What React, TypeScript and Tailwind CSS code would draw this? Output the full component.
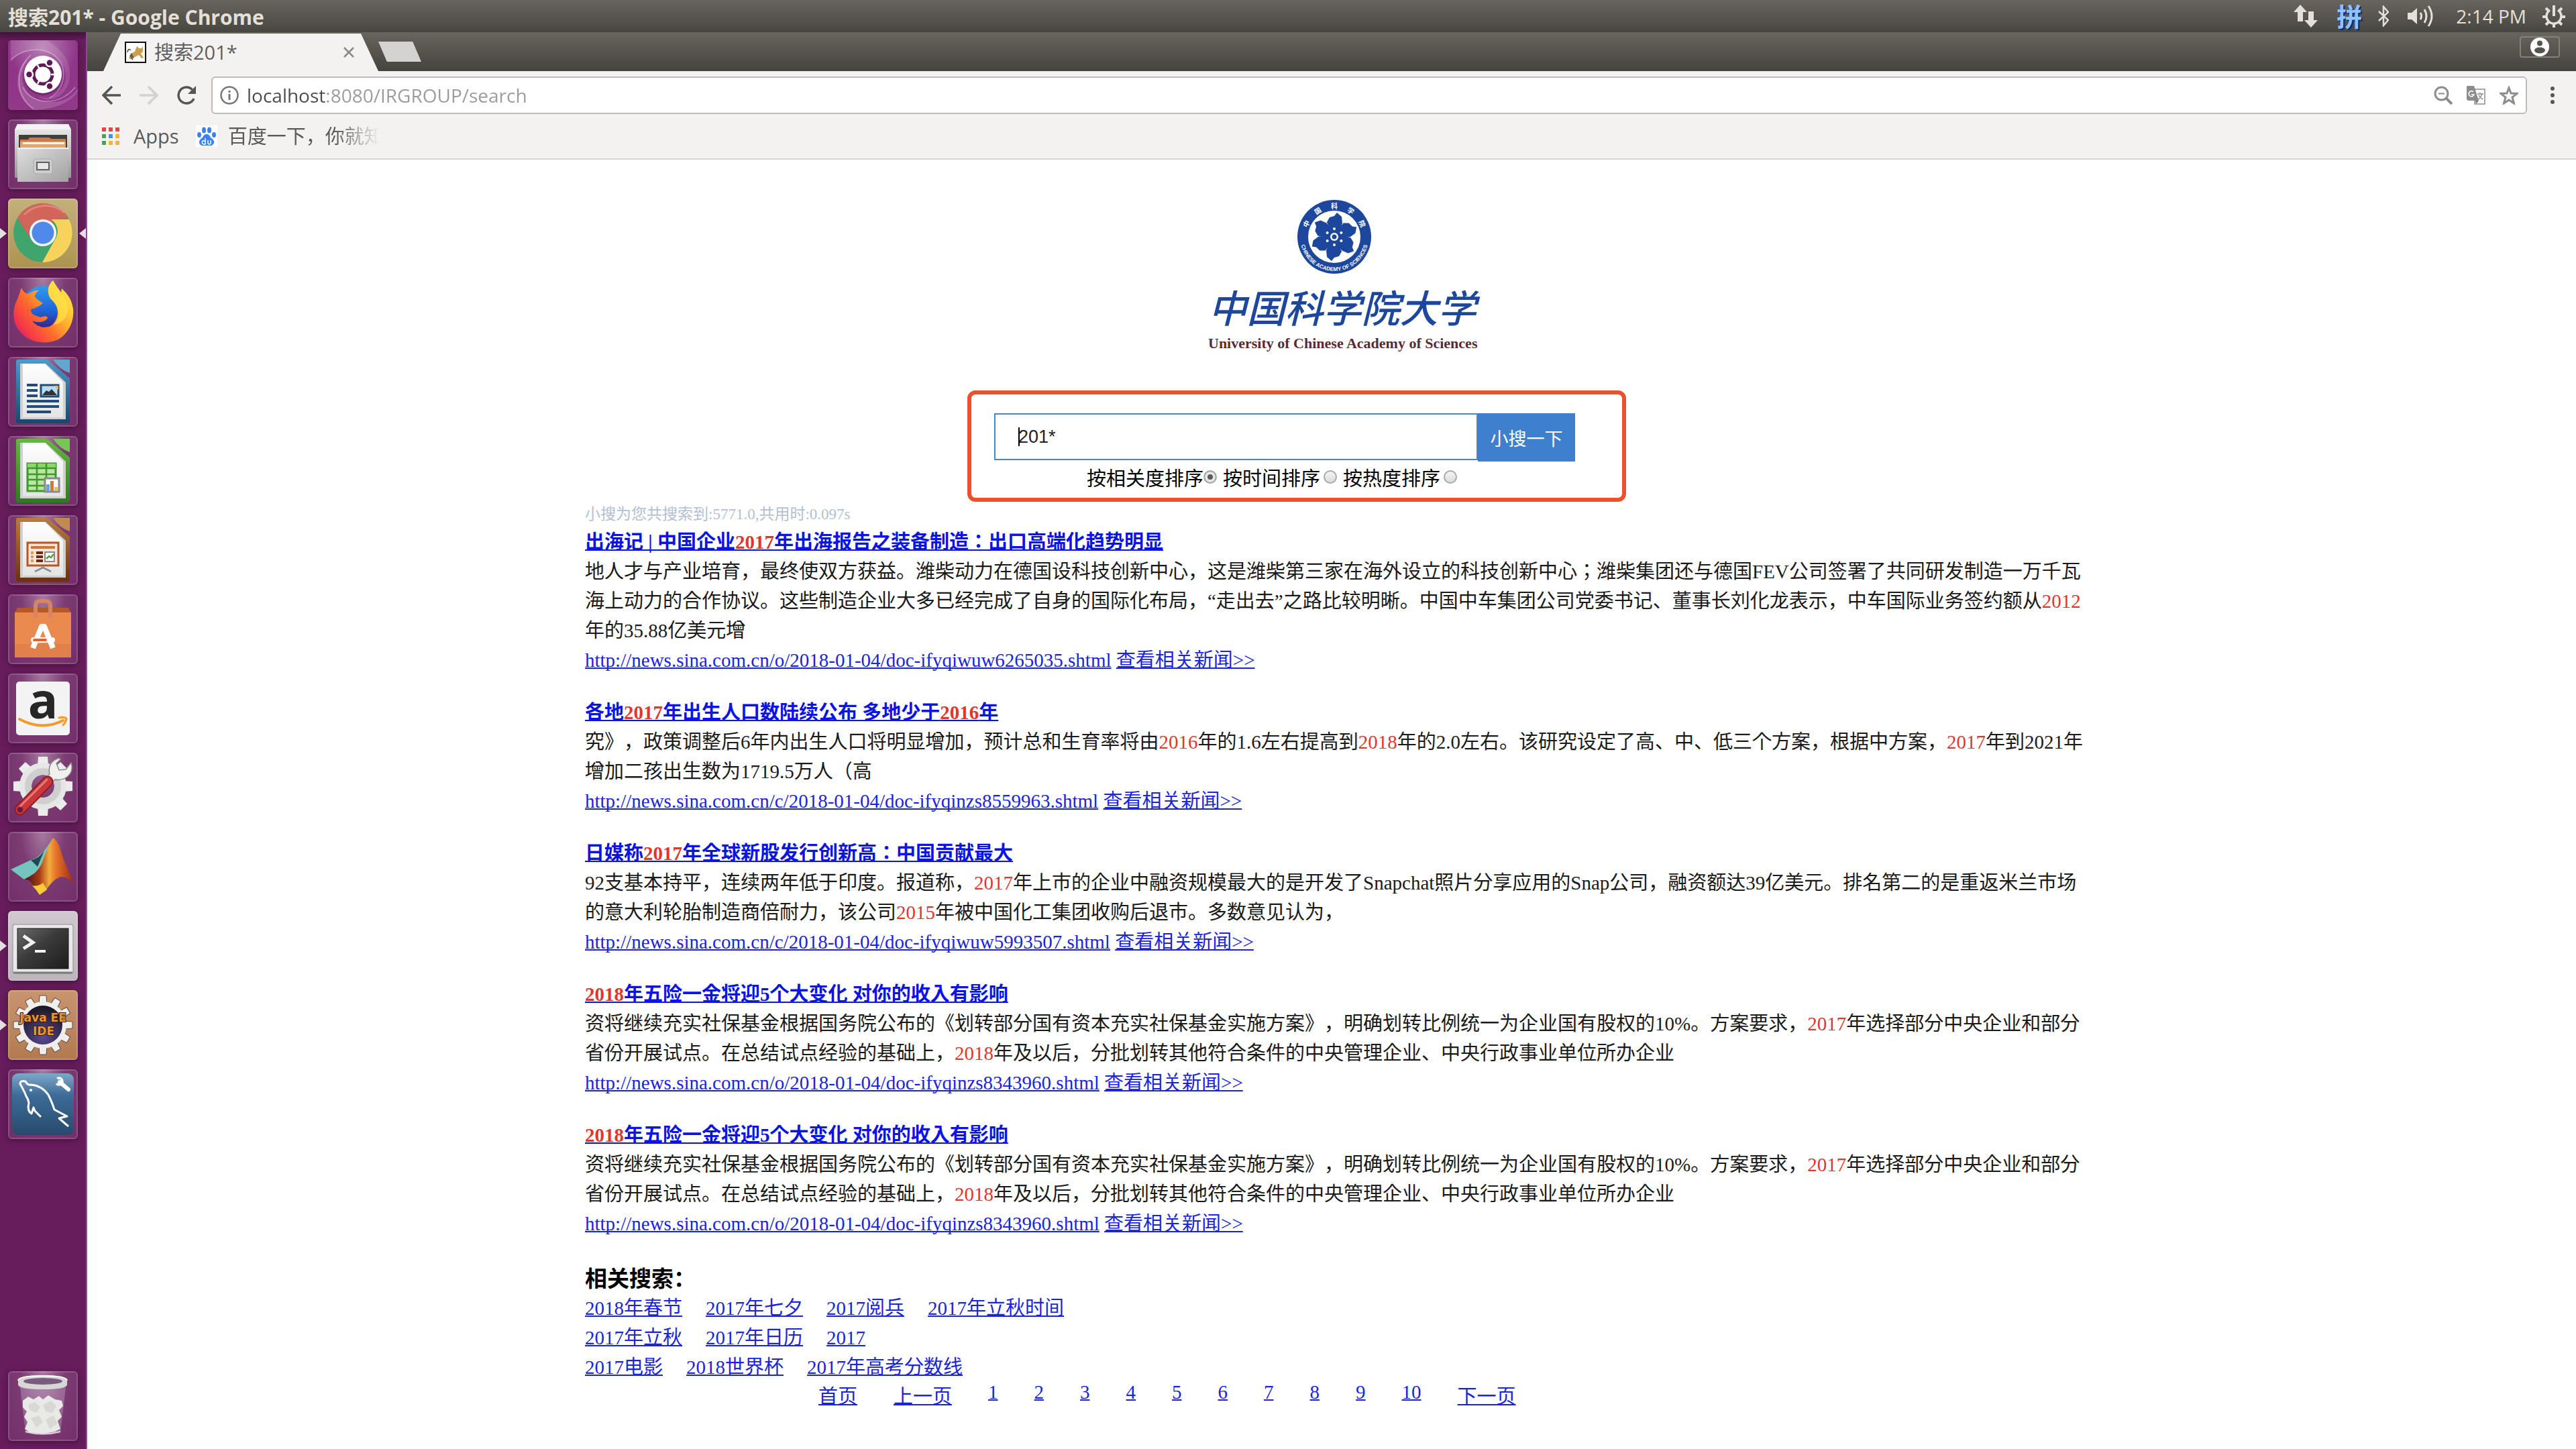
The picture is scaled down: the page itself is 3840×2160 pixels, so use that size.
import React from "react";

/* ---------- Launcher artwork (104 x 104 tiles) ---------- */

const Svg = ({ children }: { children: React.ReactNode }) => (
  <svg viewBox="0 0 104 104" className="block size-full" aria-hidden="true">
    {children}
  </svg>
);

const DashArt = () => (
  <Svg>
    <defs>
      <radialGradient id="dashBg" cx="0.5" cy="0.1" r="1">
        <stop offset="0" stopColor="#b77fb4" />
        <stop offset="0.5" stopColor="#8f3488" />
        <stop offset="1" stopColor="#93398a" />
      </radialGradient>
    </defs>
    <rect width="104" height="104" rx="5" fill="url(#dashBg)" />
    <path d="M4 30C24 8 66 8 82 38C96 66 70 92 46 84C60 96 96 84 92 44C88 14 60 4 60 0H4Z" fill="#fff" opacity="0.13" />
    <path d="M38 104C8 84 6 44 32 24C10 54 22 92 66 92C84 92 96 84 104 72V76C92 96 60 104 38 104Z" fill="#fff" opacity="0.16" />
    <path d="M4 30C24 8 66 8 80 36C88 56 78 78 62 86M38 102C10 82 10 44 34 22M22 70C34 96 76 100 100 70" stroke="#fff" strokeWidth="1.5" fill="none" opacity="0.35" />
    <circle cx="52" cy="54" r="28" fill="#3d0a3c" opacity="0.35" />
    <circle cx="52" cy="51" r="28" fill="#fff" />
    <circle cx="52" cy="51" r="14" fill="none" stroke="#5e1a58" strokeWidth="5" />
    <g stroke="#fff" strokeWidth="2.5">
      <circle cx="31.500" cy="51" r="5.500" fill="#5e1a58" />
      <circle cx="62" cy="33.500" r="5.500" fill="#5e1a58" />
      <circle cx="62" cy="68.500" r="5.500" fill="#5e1a58" />
      <path d="M44 37L47 43M44 65L47 59M64 51H72" />
    </g>
  </Svg>
);

const FilesArt = () => (
  <Svg>
    <defs>
      <linearGradient id="cab" x1="0" y1="0" x2="0" y2="1">
        <stop offset="0" stopColor="#efefef" />
        <stop offset="1" stopColor="#979797" />
      </linearGradient>
      <linearGradient id="drawer" x1="0" y1="0" x2="1" y2="1">
        <stop offset="0" stopColor="#dedede" />
        <stop offset="1" stopColor="#a2a2a2" />
      </linearGradient>
    </defs>
    <path d="M14 7H90L94 16V87H10V16Z" fill="url(#cab)" />
    <path d="M14 7H90L94 15H10Z" fill="#f3f3f3" />
    <rect x="16" y="23" width="72" height="22" fill="#3f3f3c" />
    <path d="M18 45V30H30L32 27H62L64 29H86V45Z" fill="#cf7a46" />
    <rect x="18" y="33" width="68" height="12" fill="#eba463" />
    <rect x="22" y="34" width="62" height="3" fill="#fff3e0" />
    <rect x="14" y="42" width="76" height="51" rx="1" fill="url(#drawer)" />
    <path d="M14 43H90" stroke="#f2f2f2" strokeWidth="2" />
    <rect x="38" y="59" width="28" height="22" rx="3" fill="#cdcdcd" stroke="#a8a8a8" />
    <rect x="43" y="64" width="18" height="11" fill="#e8e8e8" stroke="#5f5f5f" strokeWidth="2" />
  </Svg>
);

const ChromeArt = () => (
  <Svg>
    <circle cx="52" cy="51" r="44" fill="#3fa56c" />
    <path d="M52 51L14 29A44 44 0 0 1 90.500 30L71 31Z" fill="#d2645a" />
    <path d="M14 29A44 44 0 0 1 90.500 30H52A21 21 0 0 0 33 60Z" fill="#d2645a" />
    <path d="M90.500 30A44 44 0 0 1 51 95L70 61A21 21 0 0 0 64 31H90Z" fill="#f7d35c" />
    <path d="M24 24A44 44 0 0 1 84 21" stroke="#ea9a92" strokeWidth="3" fill="none" opacity="0.6" />
    <circle cx="52" cy="51" r="20" fill="#f4f6fb" />
    <circle cx="52" cy="51" r="16.500" fill="#5089ea" />
  </Svg>
);

const FirefoxArt = () => (
  <Svg>
    <defs>
      <linearGradient id="fx" x1="1" y1="0.1" x2="0" y2="0.9">
        <stop offset="0" stopColor="#fff44f" />
        <stop offset="0.35" stopColor="#ffb52e" />
        <stop offset="0.6" stopColor="#ff6a2c" />
        <stop offset="0.85" stopColor="#f4334c" />
        <stop offset="1" stopColor="#b31c7c" />
      </linearGradient>
      <linearGradient id="fxGlobe" x1="0" y1="0" x2="0" y2="1">
        <stop offset="0" stopColor="#2f9cf0" />
        <stop offset="0.6" stopColor="#1f62d8" />
        <stop offset="1" stopColor="#3a1d80" />
      </linearGradient>
    </defs>
    <circle cx="52" cy="44" r="32" fill="url(#fxGlobe)" />
    <path
      d="M20 15L14 32C6 46 6 66 16 78C28 97 60 102 78 90C92 80 99 62 97 46C95 34 90 26 84 20L80 16L79 22C75 16 70 10 67 4C58 12 58 24 64 32C78 44 76 60 66 70C58 77 42 74 36 64C44 68 56 66 59 60C58 56 52 58 48 59C42 56 36 56 34 50C34 46 36 46 38 46C42 44 48 42 52 38C46 34 42 32 40 28C40 24 44 20 46 19C40 18 34 22 30 24C26 24 22 20 20 15Z"
      fill="url(#fx)"
    />
    <path d="M67 4C58 12 58 24 64 32C78 44 78 60 68 70C84 68 92 54 88 38C86 28 72 16 67 4Z" fill="#ffe24a" opacity="0.75" />
  </Svg>
);

const Office = ({ id, from, to, corner, children }: { id: string; from: string; to: string; corner: string; children: React.ReactNode }) => (
  <Svg>
    <defs>
      <linearGradient id={id} x1="0" y1="0" x2="0" y2="1">
        <stop offset="0" stopColor={from} />
        <stop offset="1" stopColor={to} />
      </linearGradient>
      <linearGradient id={id + "p"} x1="0" y1="0" x2="0" y2="1">
        <stop offset="0" stopColor="#ffffff" />
        <stop offset="1" stopColor="#e4e4e4" />
      </linearGradient>
    </defs>
    <path d="M15 4H58L92 32V96Q92 99 88 99H15Q12 99 12 96V7Q12 4 15 4Z" fill={`url(#${id})`} />
    <path d="M18 10H56L86 38V93H18Z" fill="#d0d0d0" />
    <path d="M22 10H55L82 38V90H22Z" fill={`url(#${id}p)`} />
    <path d="M67 4H92V24Q78 20 67 4Z" fill={corner} />
    {children}
  </Svg>
);

const WriterArt = () => (
  <Office id="wr" from="#4f9ac9" to="#17476e" corner="#61a7cf">
    <g stroke="#1d4e7c" strokeWidth="4">
      <path d="M28 42H44M28 50H44M28 58H44M28 66H76M28 74H76M28 82H64" />
    </g>
    <rect x="49" y="42" width="26" height="17" fill="#b9dcf2" stroke="#1d4e7c" strokeWidth="3" />
    <path d="M51 57L57 50L61 52L65 48L73 57Z" fill="#333" />
    <path d="M68 43H75V49Z" fill="#e8b94a" />
  </Office>
);

const CalcArt = () => (
  <Office id="ca" from="#67b840" to="#2e7a20" corner="#78c65a">
    <rect x="29" y="41" width="42" height="41" fill="#b9e6a2" stroke="#3d9a28" strokeWidth="3" />
    <rect x="29" y="41" width="42" height="6" fill="#8fd56f" />
    <path d="M29 48H71M29 57H71M29 65H71M29 74H71M43 41V82M57 41V82" stroke="#3d9a28" strokeWidth="2.500" />
    <rect x="55" y="63" width="21" height="20" fill="#fff" stroke="#8a8a8a" strokeWidth="3" />
    <rect x="57" y="72" width="5" height="10" fill="#5aaae0" />
    <rect x="63" y="67" width="5" height="15" fill="#d8763a" />
    <rect x="69" y="76" width="5" height="6" fill="#f0c040" />
  </Office>
);

const ImpressArt = () => (
  <Office id="im" from="#b97d42" to="#6b300e" corner="#c08b52">
    <rect x="29" y="41" width="46" height="34" fill="#fbe6d8" stroke="#b4572b" strokeWidth="3" />
    <path d="M34 48H70" stroke="#d07438" strokeWidth="4" />
    <path d="M34 56H38M34 62H38M34 68H38" stroke="#d99a64" strokeWidth="4" />
    <path d="M42 56H52M42 62H52M42 68H52" stroke="#6c2a10" strokeWidth="4" />
    <rect x="55" y="55" width="14" height="14" fill="#fff" stroke="#8a8a8a" strokeWidth="2" />
    <path d="M57 65L61 61L64 63L68 58" stroke="#53a03a" strokeWidth="2.500" fill="none" />
    <path d="M52 76V79M52 78L40 84M52 78L64 84" stroke="#8f8f8f" strokeWidth="3" fill="none" />
  </Office>
);

const SoftwareArt = () => (
  <Svg>
    <path d="M14 20H90L94 27H10Z" fill="#b9572c" />
    <rect x="10" y="27" width="84" height="67" fill="#ea8a4f" />
    <rect x="10" y="74" width="84" height="20" fill="#d9794a" opacity="0.6" />
    <path d="M41 35V17Q41 10 48 10H56Q63 10 63 17V35" stroke="#d98460" strokeWidth="6" fill="none" />
    <path d="M37 80L50 48H54L67 80" stroke="#fff" strokeWidth="8" fill="none" strokeLinejoin="round" />
    <rect x="34" y="64" width="36" height="8" rx="4" fill="#fff" />
    <rect x="37" y="66" width="21" height="4" rx="2" fill="#e8632c" />
  </Svg>
);

const AmazonArt = () => (
  <Svg>
    <rect x="12" y="12" width="80" height="80" rx="5" fill="#f3f3f3" />
    <text x="52" y="67" textAnchor="middle" fontSize="74" fontWeight="bold" fontFamily="Open Sans" fill="#262626">
      a
    </text>
    <path d="M17 68Q50 86 82 70" stroke="#f39a2b" strokeWidth="4" fill="none" strokeLinecap="round" />
    <path d="M76 66Q84 64 87 67Q86 73 82 77" stroke="#f39a2b" strokeWidth="3" fill="none" strokeLinecap="round" />
  </Svg>
);

const TOOTH = [0, 45, 90, 135, 180, 225, 270, 315];

const SettingsArt = () => (
  <Svg>
    <g transform="translate(52 50)">
      {TOOTH.map((a) => (
        <path key={a} d="M-8 -30L-7 -44H7L8 -30Z" fill="#ececec" transform={`rotate(${a})`} />
      ))}
      <circle r="26" fill="none" stroke="#e6e6e6" strokeWidth="18" />
      <circle r="22" fill="none" stroke="#cfcfcf" strokeWidth="10" />
    </g>
    <path d="M62 32Q58 14 76 8L78 10L72 16L76 26L86 25L94 15Q98 28 88 36Q80 42 70 40L64 46L56 38Z" fill="#f0f0ee" stroke="#8c8c8c" strokeWidth="1.500" />
    <path d="M59 43L18 85" stroke="#8f1e22" strokeWidth="17" strokeLinecap="round" />
    <path d="M59 43L18 85" stroke="#c9373b" strokeWidth="13" strokeLinecap="round" />
    <path d="M58 40L18 80" stroke="#e67b78" strokeWidth="3" strokeLinecap="round" />
    <circle cx="18" cy="85" r="4" fill="#5e1a58" stroke="#8f1e22" />
  </Svg>
);

const MatlabArt = () => (
  <Svg>
    <defs>
      <linearGradient id="ml" x1="0" y1="0" x2="1" y2="0">
        <stop offset="0" stopColor="#3c120c" />
        <stop offset="0.3" stopColor="#a63a16" />
        <stop offset="0.5" stopColor="#f3ab3c" />
        <stop offset="0.62" stopColor="#e8772a" />
        <stop offset="1" stopColor="#9c2412" />
      </linearGradient>
    </defs>
    <path d="M4 56L34 42Q50 38 67 9Q58 50 46 58L24 71Z" fill="#74c4c0" />
    <path d="M34 42Q46 40 54 28L44 52Z" fill="#23474e" />
    <path d="M67 9Q72 12 76 20Q84 48 99 78Q86 64 76 68Q66 72 56 88L47 94Q42 86 36 78Q32 70 24 71Q42 64 50 48Q58 24 67 9Z" fill="url(#ml)" />
    <path d="M36 80Q44 82 52 76L58 86L47 94Q42 86 36 80Z" fill="#f8cc3a" />
  </Svg>
);

const TerminalArt = () => (
  <Svg>
    <defs>
      <linearGradient id="tm" x1="0" y1="0" x2="1" y2="1">
        <stop offset="0" stopColor="#6a6a6a" />
        <stop offset="0.45" stopColor="#3a3a3a" />
        <stop offset="1" stopColor="#1d1d1d" />
      </linearGradient>
    </defs>
    <rect x="7" y="20" width="90" height="73" rx="3" fill="#e9e9e9" stroke="#a9a5a9" strokeWidth="1.500" />
    <path d="M8 92H96" stroke="#7d7d7d" strokeWidth="3" />
    <rect x="14" y="26" width="76" height="60" fill="url(#tm)" stroke="#1a1a1a" />
    <path d="M23 37L37 47L23 56" stroke="#f2f2f2" strokeWidth="5" fill="none" />
    <path d="M40 60H56" stroke="#f2f2f2" strokeWidth="4" />
  </Svg>
);

const TOOTH12 = [0, 30, 60, 90, 120, 150, 180, 210, 240, 270, 300, 330];

const JavaArt = () => (
  <Svg>
    <defs>
      <radialGradient id="jv" cx="0.5" cy="0.8" r="0.8">
        <stop offset="0" stopColor="#5b4a94" />
        <stop offset="1" stopColor="#17141f" />
      </radialGradient>
    </defs>
    <g transform="translate(52 52)">
      {TOOTH12.map((a) => (
        <path key={a} d="M-6 -30L-5 -44H5L6 -30Z" fill="#eee" stroke="#5c4a40" transform={`rotate(${a})`} />
      ))}
      <circle r="35" fill="#eee" />
      <circle r="29" fill="url(#jv)" />
    </g>
    <g fill="#e8962e" stroke="#3b1d05" strokeWidth="2" paintOrder="stroke" fontWeight="bold" fontFamily="DejaVu Sans" textAnchor="middle">
      <text x="52" y="47" fontSize="17">Java EE</text>
      <text x="53" y="67" fontSize="17">IDE</text>
    </g>
  </Svg>
);

const MysqlArt = () => (
  <Svg>
    <defs>
      <linearGradient id="my" x1="0" y1="0" x2="0" y2="1">
        <stop offset="0" stopColor="#7fa9c8" />
        <stop offset="0.35" stopColor="#3c6c98" />
        <stop offset="1" stopColor="#274a6b" />
      </linearGradient>
    </defs>
    <rect x="6" y="6" width="92" height="92" rx="9" fill="url(#my)" />
    <path
      d="M49 71L40 62L38 57L35 66Q28 62 31 50Q30 44 27 40Q22 28 18 22Q18 16 26 18Q29 24 34 23Q50 24 60 38Q66 50 69 60Q80 66 88 70Q80 72 76 73Q84 80 90 85"
      stroke="#fff"
      strokeWidth="3"
      fill="none"
      strokeLinejoin="round"
    />
    <circle cx="34" cy="31" r="2" fill="#fff" />
    <path d="M77 19L90 30" stroke="#fff" strokeWidth="6" strokeLinecap="round" />
    <circle cx="76" cy="18" r="5" fill="none" stroke="#fff" strokeWidth="3.500" strokeDasharray="24 8" strokeDashoffset="12" />
  </Svg>
);

const TrashArt = () => (
  <Svg>
    <path d="M18 24L26 92Q52 98 78 92L86 24Z" fill="#d9c7dc" opacity="0.32" />
    <path
      d="M22 44L30 38L38 42L46 37L52 42L60 36L70 42L80 44L82 52L76 58L80 68L74 74L78 86L70 90L60 92L52 93L42 92L32 91L25 86L29 76L24 68L28 60L22 54Z"
      fill="#e9e9e7"
    />
    <path d="M30 50L40 46L48 54L42 62L32 58ZM52 50L64 44L72 52L66 62L56 60ZM34 70L46 66L52 76L42 84ZM56 72L68 66L74 78L62 86Z" fill="#d8d8d5" />
    <path d="M26 90Q52 97 78 90" stroke="#fff" strokeWidth="2" fill="none" opacity="0.7" />
    <path d="M15 14Q15 6 52 6Q88 6 88 14V20Q88 27 52 27Q15 27 15 20Z" fill="#d6d6d4" />
    <ellipse cx="52" cy="15" rx="29" ry="5" fill="#7b5a80" />
    <path d="M15 14Q15 7 52 7Q88 7 88 14" stroke="#fff" strokeWidth="2" fill="none" />
  </Svg>
);

const GLASS =
  "bg-[radial-gradient(ellipse_at_50%_0%,rgba(255,255,255,0.42)_0%,rgba(255,255,255,0.14)_45%,rgba(255,255,255,0.08)_100%)]";

const APPS = [
  { name: "Search your computer", art: <DashArt />, bg: GLASS },
  { name: "Files", art: <FilesArt />, bg: GLASS },
  { name: "Google Chrome", art: <ChromeArt />, bg: "bg-linear-to-b from-[#c4b07c] to-[#ad9350]", running: true, active: true },
  { name: "Firefox", art: <FirefoxArt />, bg: GLASS },
  { name: "LibreOffice Writer", art: <WriterArt />, bg: GLASS },
  { name: "LibreOffice Calc", art: <CalcArt />, bg: GLASS },
  { name: "LibreOffice Impress", art: <ImpressArt />, bg: GLASS },
  { name: "Ubuntu Software", art: <SoftwareArt />, bg: GLASS },
  { name: "Amazon", art: <AmazonArt />, bg: GLASS },
  { name: "System Settings", art: <SettingsArt />, bg: GLASS },
  { name: "MATLAB", art: <MatlabArt />, bg: GLASS },
  { name: "Terminal", art: <TerminalArt />, bg: "bg-linear-to-b from-[#cfc8cf] to-[#bdb3bd]", running: true },
  { name: "Java EE IDE", art: <JavaArt />, bg: "bg-linear-to-b from-[#c9956e] to-[#b27a50]", running: true },
  { name: "MySQL Workbench", art: <MysqlArt />, bg: GLASS },
];

const Tile = ({ name, art, bg, running, active }: { name: string; art: React.ReactNode; bg: string; running?: boolean; active?: boolean }) => (
  <div className="relative flex w-full justify-center">
    {running && (
      <svg viewBox="0 0 10 16" className="absolute top-11 left-0 h-4 w-2.5" aria-hidden="true">
        <path d="M0 0L10 8L0 16Z" fill="#e3dfe3" />
      </svg>
    )}
    <button
      type="button"
      aria-label={name}
      className={`size-26 rounded-md shadow-[0_2px_8px_rgba(0,0,0,0.35),inset_0_0_0_2px_rgba(255,255,255,0.16)] ${bg}`}
    >
      {art}
    </button>
    {active && (
      <svg viewBox="0 0 10 16" className="absolute top-11 right-0 h-4 w-2.5" aria-hidden="true">
        <path d="M10 0L0 8L10 16Z" fill="#e3dfe3" />
      </svg>
    )}
  </div>
);

const Launcher = () => (
  <nav
    aria-label="Launcher"
    className="flex w-[130px] shrink-0 flex-col gap-3.5 border-r-2 border-[#86508a] bg-[#671c5c] bg-linear-to-b from-[#3f1139] to-[#671c5c] to-[12px] py-3"
  >
    {APPS.map((a) => (
      <Tile key={a.name} {...a} />
    ))}
    <div className="mt-auto">
      <Tile name="Trash" art={<TrashArt />} bg={GLASS} />
    </div>
  </nav>
);

/* ---------- Desktop menu bar ---------- */

const MenuBar = () => (
  <header className="flex h-12 items-center justify-between bg-linear-to-b from-[#67655c] to-[#484641] pr-4 pl-3 text-[#e4e0d8]">
    <h1 className="pt-1 text-[30px] leading-[40px] font-bold">搜索201* - Google Chrome</h1>
    <div className="flex items-center">
      <svg viewBox="0 0 36 34" className="h-[34px] w-9" fill="#e4e0d8" aria-hidden="true">
        <path d="M10 0L20 11H14V25H6V11H0ZM26 34L16 23H22V10H30V23H36Z" />
      </svg>
      <span className="ml-7 text-[38px] leading-[44px] font-bold text-[#8dc4ff] [text-shadow:2px_2px_0_#0c2a86]">拼</span>
      <svg viewBox="0 0 16 32" className="ml-6 h-8 w-4" fill="none" stroke="#e4e0d8" strokeWidth="2.500" aria-hidden="true">
        <path d="M1 9L15 22L8 30V2L15 10L1 23" />
      </svg>
      <svg viewBox="0 0 40 34" className="ml-7 h-[34px] w-10" fill="none" stroke="#e4e0d8" strokeWidth="3" aria-hidden="true">
        <path d="M0 12H6L14 5V29L6 22H0Z" fill="#e4e0d8" stroke="none" />
        <path d="M19 12Q22 17 19 22M25 7Q31 17 25 27M31 2Q41 17 31 32" />
      </svg>
      <time className="ml-8 text-[28px] leading-[40px]">2:14 PM</time>
      <svg viewBox="0 0 34 34" className="ml-6 size-[34px]" fill="none" stroke="#e4e0d8" aria-hidden="true">
        <path d="M11 8A11 11 0 1 0 23 8" strokeWidth="3.500" />
        <path d="M17 1V17" strokeWidth="4" />
        <path d="M5 5L9 9M29 5L25 9M0 18H6M28 18H34M5 30L9 26M29 30L25 26M17 29V34" strokeWidth="4" />
      </svg>
    </div>
  </header>
);

/* ---------- Browser frame ---------- */

const TabStrip = () => (
  <div className="flex h-[58px] items-start justify-between bg-linear-to-b from-[#67655c] to-[#45433d] pr-6 pl-6">
    <div className="flex items-start pt-0.5">
      <div className="flex h-14 w-[410px] items-center bg-[#f3f2f1] px-8 [clip-path:polygon(26px_0,384px_0,100%_100%,0_100%)]">
        <svg viewBox="0 0 32 32" className="size-8" aria-hidden="true">
          <rect x="1" y="1" width="30" height="30" fill="#fff" stroke="#111" strokeWidth="2" />
          <path d="M6 24L10 17L15 15L17 9L19 7L21 10H25L27 7V15L24 18L28 24L25 25L21 20L15 23L9 27Z" fill="#c9a04e" />
          <path d="M4 16Q5 9 9 13M9 18L13 24M8 20L12 27" stroke="#444" strokeWidth="1.500" fill="none" />
        </svg>
        <span className="ml-3 grow text-[29px] leading-[40px] text-[#5f5f5f]">搜索201*</span>
        <button type="button" aria-label="Close tab" className="mr-1">
          <svg viewBox="0 0 16 16" className="size-4" stroke="#8a8a8a" strokeWidth="2.500" aria-hidden="true">
            <path d="M1 1L15 15M15 1L1 15" />
          </svg>
        </button>
      </div>
      <button
        type="button"
        aria-label="New tab"
        className="mt-3 h-[30px] w-16 bg-[#d4d3d1] [clip-path:polygon(0_0,80%_0,100%_100%,20%_100%)]"
      />
    </div>
    <button type="button" aria-label="Profile" className="mt-1.5 flex h-8 w-[60px] items-center justify-center rounded-sm border-2 border-[#83817a]">
      <svg viewBox="0 0 28 28" className="size-7" aria-hidden="true">
        <circle cx="14" cy="14" r="14" fill="#fff" />
        <circle cx="14" cy="8.500" r="4" fill="#55534d" />
        <ellipse cx="14" cy="19" rx="8" ry="4.500" fill="#55534d" />
      </svg>
    </button>
  </div>
);

const Toolbar = () => (
  <div className="flex h-[72px] items-center pr-[31px] pl-[22px]">
    <button type="button" aria-label="Back">
      <svg viewBox="0 0 28 28" className="size-7" fill="none" stroke="#555" strokeWidth="3.500" aria-hidden="true">
        <path d="M28 14H3M15 1L2 14L15 27" />
      </svg>
    </button>
    <button type="button" aria-label="Forward" className="ml-7">
      <svg viewBox="0 0 28 28" className="size-7" fill="none" stroke="#d2d1d0" strokeWidth="3.500" aria-hidden="true">
        <path d="M0 14H25M13 1L26 14L13 27" />
      </svg>
    </button>
    <button type="button" aria-label="Reload" className="ml-7">
      <svg viewBox="0 0 28 28" className="size-7" fill="none" stroke="#555" strokeWidth="3.500" aria-hidden="true">
        <path d="M25 19A12 12 0 1 1 22.500 5.500" />
        <path d="M28 0V12H16Z" fill="#555" stroke="none" />
      </svg>
    </button>
    <div className="ml-[23px] flex h-14 grow items-center rounded-md border-2 border-[#bdbcbb] bg-white px-[11px]">
      <svg viewBox="0 0 28 28" className="size-7" fill="none" stroke="#777" strokeWidth="2.500" aria-hidden="true">
        <circle cx="14" cy="14" r="12.500" />
        <path d="M14 12V21M14 7V10" strokeWidth="3" />
      </svg>
      <input
        aria-label="Address"
        defaultValue="localhost:8080/IRGROUP/search"
        className="ml-3 min-w-0 grow bg-linear-to-r from-[#4a4a4a] from-[118px] to-[#9b9b9b] to-[118px] bg-clip-text text-[28px] leading-[40px] text-transparent outline-none"
      />
      <button type="button" aria-label="Zoom">
        <svg viewBox="0 0 28 28" className="size-7" fill="none" stroke="#8c8c8c" strokeWidth="3" aria-hidden="true">
          <circle cx="11.500" cy="11.500" r="9.500" />
          <path d="M18 18L27 27" strokeWidth="4" />
          <path d="M7 11.500H16" strokeWidth="2" />
        </svg>
      </button>
      <button type="button" aria-label="Translate" className="ml-[21px]">
        <svg viewBox="0 0 28 28" className="size-7" aria-hidden="true">
          <rect x="12" y="5" width="15" height="22" fill="#fff" stroke="#8c8c8c" strokeWidth="1.500" />
          <path d="M1 0H11L18 22H3Q0 22 0 19V2Q0 0 1 0Z" fill="#8c8c8c" />
          <path d="M13 22H18L14 27Z" fill="#777" />
          <path d="M10 9A4 4 0 1 0 11 13H7" stroke="#fff" strokeWidth="1.500" fill="none" />
          <path d="M16 12H25M20 10V12M23 12Q21 18 17 20M18 14Q20 18 24 20" stroke="#8c8c8c" strokeWidth="1.500" fill="none" />
        </svg>
      </button>
      <button type="button" aria-label="Bookmark this page" className="ml-[21px]">
        <svg viewBox="0 0 28 28" className="size-7" fill="none" stroke="#8c8c8c" strokeWidth="3" aria-hidden="true">
          <path d="M14 3L17 11L26 11.500L19 17L21.500 26L14 21L6.500 26L9 17L2 11.500L11 11Z" />
        </svg>
      </button>
    </div>
    <button type="button" aria-label="Menu" className="ml-[34px]">
      <svg viewBox="0 0 8 28" className="h-7 w-2" fill="#555" aria-hidden="true">
        <circle cx="4" cy="4" r="3" />
        <circle cx="4" cy="14" r="3" />
        <circle cx="4" cy="24" r="3" />
      </svg>
    </button>
  </div>
);

const BookmarkBar = () => (
  <div className="flex h-[60px] items-center border-b-2 border-[#d5d4d3] pb-2 pl-[22px] text-[29px] leading-[40px] text-[#5a5a5a]">
    <svg viewBox="0 0 26 26" className="size-[26px]" aria-hidden="true">
      <path d="M0 0H6V6H0ZM10 0H16V6H10ZM20 0H26V6H20Z" fill="#e0493e" />
      <path d="M0 10H6V16H0ZM0 20H6V26H0Z" fill="#4d9e5f" />
      <path d="M10 10H16V16H10Z" fill="#4a8cf5" />
      <path d="M20 10H26V16H20ZM10 20H16V26H10ZM20 20H26V26H20Z" fill="#f0b33c" />
    </svg>
    <a href="#apps" className="ml-[21px]">
      Apps
    </a>
    <svg viewBox="0 0 32 32" className="ml-[25px] size-8" aria-hidden="true">
      <rect width="32" height="32" fill="#fff" />
      <g fill="#3b82f0">
        <ellipse cx="12" cy="7" rx="3" ry="4.500" />
        <ellipse cx="20" cy="7" rx="3" ry="4.500" />
        <ellipse cx="5" cy="14" rx="3" ry="4" />
        <ellipse cx="27" cy="14" rx="3" ry="4" />
        <path d="M16 13Q20 13 22 18Q28 22 27 26Q25 31 20 30H12Q7 31 5 26Q4 22 10 18Q12 13 16 13Z" />
      </g>
      <path d="M14 19V28H11Q8 26 10 23H14M18 22V27Q20 29 22 27V22" stroke="#fff" strokeWidth="1.500" fill="none" />
    </svg>
    <a
      href="#baidu"
      className="ml-4 whitespace-nowrap [mask-image:linear-gradient(to_right,black_160px,transparent_226px)]"
    >
      百度一下，你就知
    </a>
  </div>
);

/* ---------- Search page ---------- */

const PETALS = [0, 60, 120, 180, 240, 300];

const Emblem = () => (
  <svg viewBox="0 0 112 112" className="ml-[132px] size-28" aria-hidden="true">
    <defs>
      <path id="ringTop" d="M14 56A42 42 0 0 1 98 56" />
      <path id="ringBottom" d="M5 56A51 51 0 0 0 107 56" />
    </defs>
    <circle cx="56" cy="56" r="55" fill="#1c479c" />
    <circle cx="56" cy="56" r="39" fill="#fff" />
    <g fill="#fff" fontWeight="bold" fontFamily="Noto Sans CJK SC">
      {["中", "国", "科", "学", "院"].map((c, i) => (
        <text key={c} fontSize="10" textAnchor="middle">
          <textPath href="#ringTop" startOffset={`${14 + i * 18}%`}>
            {c}
          </textPath>
        </text>
      ))}
      <text fontSize="8" textAnchor="middle" fontFamily="Liberation Sans">
        <textPath href="#ringBottom" startOffset="50%">
          CHINESE ACADEMY OF SCIENCES
        </textPath>
      </text>
    </g>
    <g transform="translate(56 56)" fill="#1c479c">
      {PETALS.map((a) => (
        <path key={a} d="M0 0L-7 -11L-11 -22L-7 -29L0 -31L4 -36L11 -30L12 -20L7 -9Z" transform={`rotate(${a})`} />
      ))}
      <circle r="14" />
      <g fill="#fff">
        {PETALS.map((a) => (
          <circle key={a} cx="0" cy="-12" r="2" transform={`rotate(${a})`} />
        ))}
        <circle r="6" />
      </g>
      <circle r="3.500" />
    </g>
  </svg>
);

const Logo = () => (
  <div className="ml-[929px] w-[400px] pt-[59px]">
    <Emblem />
    <p className="mt-3 text-center font-['Noto_Sans_CJK_SC',sans-serif] text-[57px] leading-[70px] font-medium whitespace-nowrap text-[#1c479c] italic">
      中国科学院大学
    </p>
    <p className="mt-[7px] text-center font-['Liberation_Serif',serif] text-[22px] leading-[28px] font-bold whitespace-nowrap text-[#5a2a30]">
      University of Chinese Academy of Sciences
    </p>
  </div>
);

const SORTS = [
  { id: "relevance", label: "按相关度排序", gap: "ml-0" },
  { id: "time", label: "按时间排序", gap: "ml-[5px]" },
  { id: "hot", label: "按热度排序", gap: "ml-[5px]" },
];

const SearchBox = () => (
  <form
    className="mt-14 ml-[570px] w-[982px] rounded-xl border-6 border-[#ea522c] pt-7 pb-2 pl-[34px] font-['Liberation_Sans','Noto_Sans_CJK_SC',sans-serif]"
    onSubmit={(e) => e.preventDefault()}
  >
    <div className="relative flex items-start">
      <input
        aria-label="搜索"
        defaultValue="201*"
        className="h-[70px] w-[721px] border-2 border-[#4a86c8] bg-white px-[34px] text-[27px] text-[#222] outline-none"
      />
      <span className="absolute top-[21px] left-9 h-7 w-0.5 bg-black" />
      <button type="submit" className="h-[72px] w-[145px] bg-[#3f80cd] pt-1.5 text-[27px] leading-[40px] text-white">
        小搜一下
      </button>
    </div>
    <div className="flex h-[46px] items-center gap-[9px] pl-[138px] font-['Noto_Sans_CJK_SC',sans-serif] text-[29px] leading-[44px] text-black">
      {SORTS.map((s, i) => (
        <div key={s.id} className="flex items-center">
          <label htmlFor={s.id}>{s.label}</label>
          <input
            id={s.id}
            name="sort"
            type="radio"
            defaultChecked={i === 0}
            className={`size-5 appearance-none rounded-full border-2 border-[#a9a9a9] bg-linear-to-b from-[#f4f4f4] to-[#dcdcdc] checked:bg-none checked:bg-[#5c5c5c] checked:shadow-[inset_0_0_0_4px_#e8e8e8] ${s.gap}`}
          />
        </div>
      ))}
    </div>
  </form>
);

/* "[...]" marks a highlighted match */
const mark = (text: string) =>
  text.split(/(\[[^\]]+\])/).map((part, i) =>
    part.startsWith("[") ? (
      <span key={i} className="text-[#e2362c]">
        {part.slice(1, -1)}
      </span>
    ) : (
      part
    ),
  );

const INSURANCE = {
  title: "[2018]年五险一金将迎5个大变化 对你的收入有影响",
  body: "资将继续充实社保基金根据国务院公布的《划转部分国有资本充实社保基金实施方案》，明确划转比例统一为企业国有股权的10%。方案要求，[2017]年选择部分中央企业和部分省份开展试点。在总结试点经验的基础上，[2018]年及以后，分批划转其他符合条件的中央管理企业、中央行政事业单位所办企业",
  url: "http://news.sina.com.cn/o/2018-01-04/doc-ifyqinzs8343960.shtml",
};

const RESULTS = [
  {
    title: "出海记 | 中国企业[2017]年出海报告之装备制造：出口高端化趋势明显",
    body: "地人才与产业培育，最终使双方获益。潍柴动力在德国设科技创新中心，这是潍柴第三家在海外设立的科技创新中心；潍柴集团还与德国FEV公司签署了共同研发制造一万千瓦海上动力的合作协议。这些制造企业大多已经完成了自身的国际化布局，“走出去”之路比较明晰。中国中车集团公司党委书记、董事长刘化龙表示，中车国际业务签约额从[2012]年的35.88亿美元增",
    url: "http://news.sina.com.cn/o/2018-01-04/doc-ifyqiwuw6265035.shtml",
  },
  {
    title: "各地[2017]年出生人口数陆续公布 多地少于[2016]年",
    body: "究》，政策调整后6年内出生人口将明显增加，预计总和生育率将由[2016]年的1.6左右提高到[2018]年的2.0左右。该研究设定了高、中、低三个方案，根据中方案，[2017]年到2021年增加二孩出生数为1719.5万人（高",
    url: "http://news.sina.com.cn/c/2018-01-04/doc-ifyqinzs8559963.shtml",
  },
  {
    title: "日媒称[2017]年全球新股发行创新高：中国贡献最大",
    body: "92支基本持平，连续两年低于印度。报道称，[2017]年上市的企业中融资规模最大的是开发了Snapchat照片分享应用的Snap公司，融资额达39亿美元。排名第二的是重返米兰市场的意大利轮胎制造商倍耐力，该公司[2015]年被中国化工集团收购后退市。多数意见认为，",
    url: "http://news.sina.com.cn/c/2018-01-04/doc-ifyqiwuw5993507.shtml",
  },
  INSURANCE,
  INSURANCE,
];

const RELATED = [
  ["2018年春节", "2017年七夕", "2017阅兵", "2017年立秋时间"],
  ["2017年立秋", "2017年日历", "2017"],
  ["2017电影", "2018世界杯", "2017年高考分数线"],
];

const PAGES = ["首页", "上一页", "1", "2", "3", "4", "5", "6", "7", "8", "9", "10", "下一页"];

const LINK = "text-[#1a24dd] underline decoration-2 [text-decoration-skip-ink:none]";

const Results = () => (
  <div className="font-['Liberation_Serif','Noto_Sans_CJK_JP',serif] text-[29px] leading-[44px] text-[#1a1a1a] [text-spacing-trim:space-all]">
    <p className="text-[23px] leading-[38px] text-[#b3c0d2]">小搜为您共搜索到:5771.0,共用时:0.097s</p>
    {RESULTS.map((r, i) => (
      <article key={i} className="mb-[34px]">
        <h2 className="font-bold">
          <a href={r.url} className="text-[#0a14e6] underline decoration-2 [text-decoration-skip-ink:none]">
            {mark(r.title)}
          </a>
        </h2>
        <p>{mark(r.body)}</p>
        <p>
          <a href={r.url} className={LINK}>
            {r.url}
          </a>{" "}
          <a href="#related" className={LINK}>
            查看相关新闻&gt;&gt;
          </a>
        </p>
      </article>
    ))}
    <h3 className="font-['Noto_Sans_CJK_SC',sans-serif] text-[33px] leading-[48px] font-bold text-black">相关搜索：</h3>
    {RELATED.map((row) => (
      <ul key={row[0]} className="flex gap-[35px]">
        {row.map((t) => (
          <li key={t}>
            <a href="#search" className={LINK}>
              {t}
            </a>
          </li>
        ))}
      </ul>
    ))}
    <ul className="flex items-start gap-[54px] pl-[348px]">
      {PAGES.map((p) => (
        <li key={p} className={/\d/.test(p) ? "leading-[30px]" : ""}>
          <a href="#page" className={LINK}>
            {p}
          </a>
        </li>
      ))}
    </ul>
  </div>
);

export default function App() {
  return (
    <div className="flex min-h-screen flex-col bg-white font-['Open_Sans','Noto_Sans_CJK_SC',sans-serif]">
      <MenuBar />
      <div className="flex grow">
        <Launcher />
        <div className="min-w-0 grow">
          <div className="bg-[#f3f2f1]">
            <TabStrip />
            <Toolbar />
            <BookmarkBar />
          </div>
          <main className="ml-[20%] w-[60.4%]">
            <Logo />
            <SearchBox />
            <Results />
          </main>
        </div>
      </div>
    </div>
  );
}
